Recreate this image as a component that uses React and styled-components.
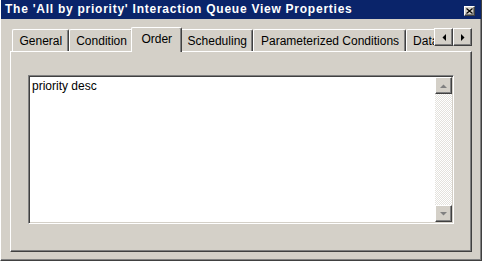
import React from "react";
import styled, { createGlobalStyle, css } from "styled-components";

const Global = createGlobalStyle`
  html, body { margin: 0; padding: 0; background: #d4d0c8; }
  body { font-family: "Liberation Sans", Arial, sans-serif; }
`;

const Window = styled.div`
  width: 482px;
  height: 261px;
  box-sizing: border-box;
  background: #d4d0c8;
  display: flex;
  flex-direction: column;
  border-left: 1px solid #ffffff;
  border-right: 1px solid #404040;
  border-bottom: 1px solid #404040;
  box-shadow: inset -1px -1px 0 #808080;
  overflow: hidden;
`;

const TitleBar = styled.div`
  height: 19px;
  margin-left: -1px;
  margin-right: -1px;
  background: #0a246a;
  color: #ffffff;
  display: flex;
  align-items: center;
  justify-content: space-between;
  padding: 0 7px 0 5px;
  flex: none;
`;

const Title = styled.span`
  font-family: "Liberation Sans", Arial, sans-serif;
  font-weight: bold;
  font-size: 12px;
  letter-spacing: 0.75px;
  line-height: 19px;
  white-space: nowrap;
`;

const raised = css`
  box-sizing: border-box;
  background: #d4d0c8;
  border: 1px solid;
  border-color: #ffffff #404040 #404040 #ffffff;
  box-shadow: inset -1px -1px 0 #808080;
`;

const CloseButton = styled.div`
  ${raised};
  width: 11px;
  height: 10px;
  margin-top: 3px;
  display: flex;
  align-items: center;
  justify-content: center;
`;

const Body = styled.div`
  flex: 1;
  display: flex;
  flex-direction: column;
  padding: 8px 9px 8px 9px;
`;

const TabStrip = styled.div`
  height: 25px;
  display: flex;
  position: relative;
  z-index: 1;
  padding-left: 2px;
`;

const TabViewport = styled.div`
  flex: 1;
  display: flex;
  align-items: flex-start;
  overflow: hidden;
  height: 25px;
`;

const Tab = styled.div`
  box-sizing: border-box;
  flex: none;
  background: #d4d0c8;
  font-size: 12px;
  line-height: 14px;
  color: #000;
  white-space: nowrap;
  border-top: 1px solid #ffffff;
  border-left: 1px solid #ffffff;
  border-right: 1px solid #404040;
  box-shadow: inset -1px 0 0 #808080;
  border-radius: 2px 2px 0 0;
  position: relative;
  ${(p) =>
    p.$active
      ? css`
          height: 25px;
          margin: 0 -2px;
          padding: 4px 9px 0 9px;
          z-index: 2;
        `
      : css`
          height: 22px;
          margin-top: 2px;
          padding: 4px 5.5px 0 6.5px;
        `}
`;

const Arrows = styled.div`
  display: flex;
  margin-top: 1px;
  flex: none;
`;

const ArrowButton = styled.div`
  ${raised};
  width: 19px;
  height: 18px;
  display: flex;
  align-items: center;
  justify-content: center;
`;

const Panel = styled.div`
  flex: 1;
  margin-top: -1px;
  box-sizing: border-box;
  border-top: 1px solid #ffffff;
  border-left: 1px solid #ffffff;
  border-right: 1px solid #404040;
  border-bottom: 1px solid #404040;
  box-shadow: inset -1px -1px 0 #808080;
  padding: 23px 17px 0 17px;
`;

const TextBox = styled.div`
  box-sizing: border-box;
  height: 149px;
  display: flex;
  background: #ffffff;
  border: 1px solid;
  border-color: #808080 #ffffff #ffffff #808080;
  box-shadow: inset 1px 1px 0 #404040, inset -1px -1px 0 #d4d0c8;
  padding: 1px;
`;

const TextContent = styled.div`
  flex: 1;
  font-size: 12px;
  line-height: 14px;
  padding: 2px 2px;
  color: #000;
`;

const ScrollBar = styled.div`
  width: 17px;
  display: flex;
  flex-direction: column;
  justify-content: space-between;
  background-color: #ffffff;
  background-image: conic-gradient(#e4e2dd 25%, #ffffff 0 50%, #e4e2dd 0 75%, #ffffff 0);
  background-size: 2px 2px;
`;

const ScrollButton = styled.div`
  ${raised};
  width: 17px;
  height: 17px;
  display: flex;
  align-items: center;
  justify-content: center;
`;

const Tri = ({ dir, color = "#000" }) => {
  const pts = {
    up: "0,4 7,4 3.5,0.5",
    down: "0,0 7,0 3.5,3.5",
    left: "4,0 4,7 0.5,3.5",
    right: "0,0 0,7 3.5,3.5",
  }[dir];
  const vertical = dir === "up" || dir === "down";
  return (
    <svg width={vertical ? 7 : 4} height={vertical ? 4 : 7} viewBox={vertical ? "0 0 7 4" : "0 0 4 7"}>
      <polygon points={pts} fill={color} />
    </svg>
  );
};

const tabs = ["General", "Condition", "Order", "Scheduling", "Parameterized Conditions", "Data"];

export default function App() {
  return (
    <>
      <Global />
      <Window>
        <TitleBar>
          <Title>The 'All by priority' Interaction Queue View Properties</Title>
          <CloseButton>
            <svg width="7" height="6" viewBox="0 0 7 6">
              <path d="M0.5 0.5 L6.5 5.5 M6.5 0.5 L0.5 5.5" stroke="#000" strokeWidth="1.2" />
            </svg>
          </CloseButton>
        </TitleBar>
        <Body>
          <TabStrip>
            <TabViewport>
              {tabs.map((t) => (
                <Tab key={t} $active={t === "Order"}>
                  {t}
                </Tab>
              ))}
            </TabViewport>
            <Arrows>
              <ArrowButton>
                <Tri dir="left" />
              </ArrowButton>
              <ArrowButton>
                <Tri dir="right" />
              </ArrowButton>
            </Arrows>
          </TabStrip>
          <Panel>
            <TextBox>
              <TextContent>priority desc</TextContent>
              <ScrollBar>
                <ScrollButton>
                  <Tri dir="up" color="#808080" />
                </ScrollButton>
                <ScrollButton>
                  <Tri dir="down" color="#808080" />
                </ScrollButton>
              </ScrollBar>
            </TextBox>
          </Panel>
        </Body>
      </Window>
    </>
  );
}
